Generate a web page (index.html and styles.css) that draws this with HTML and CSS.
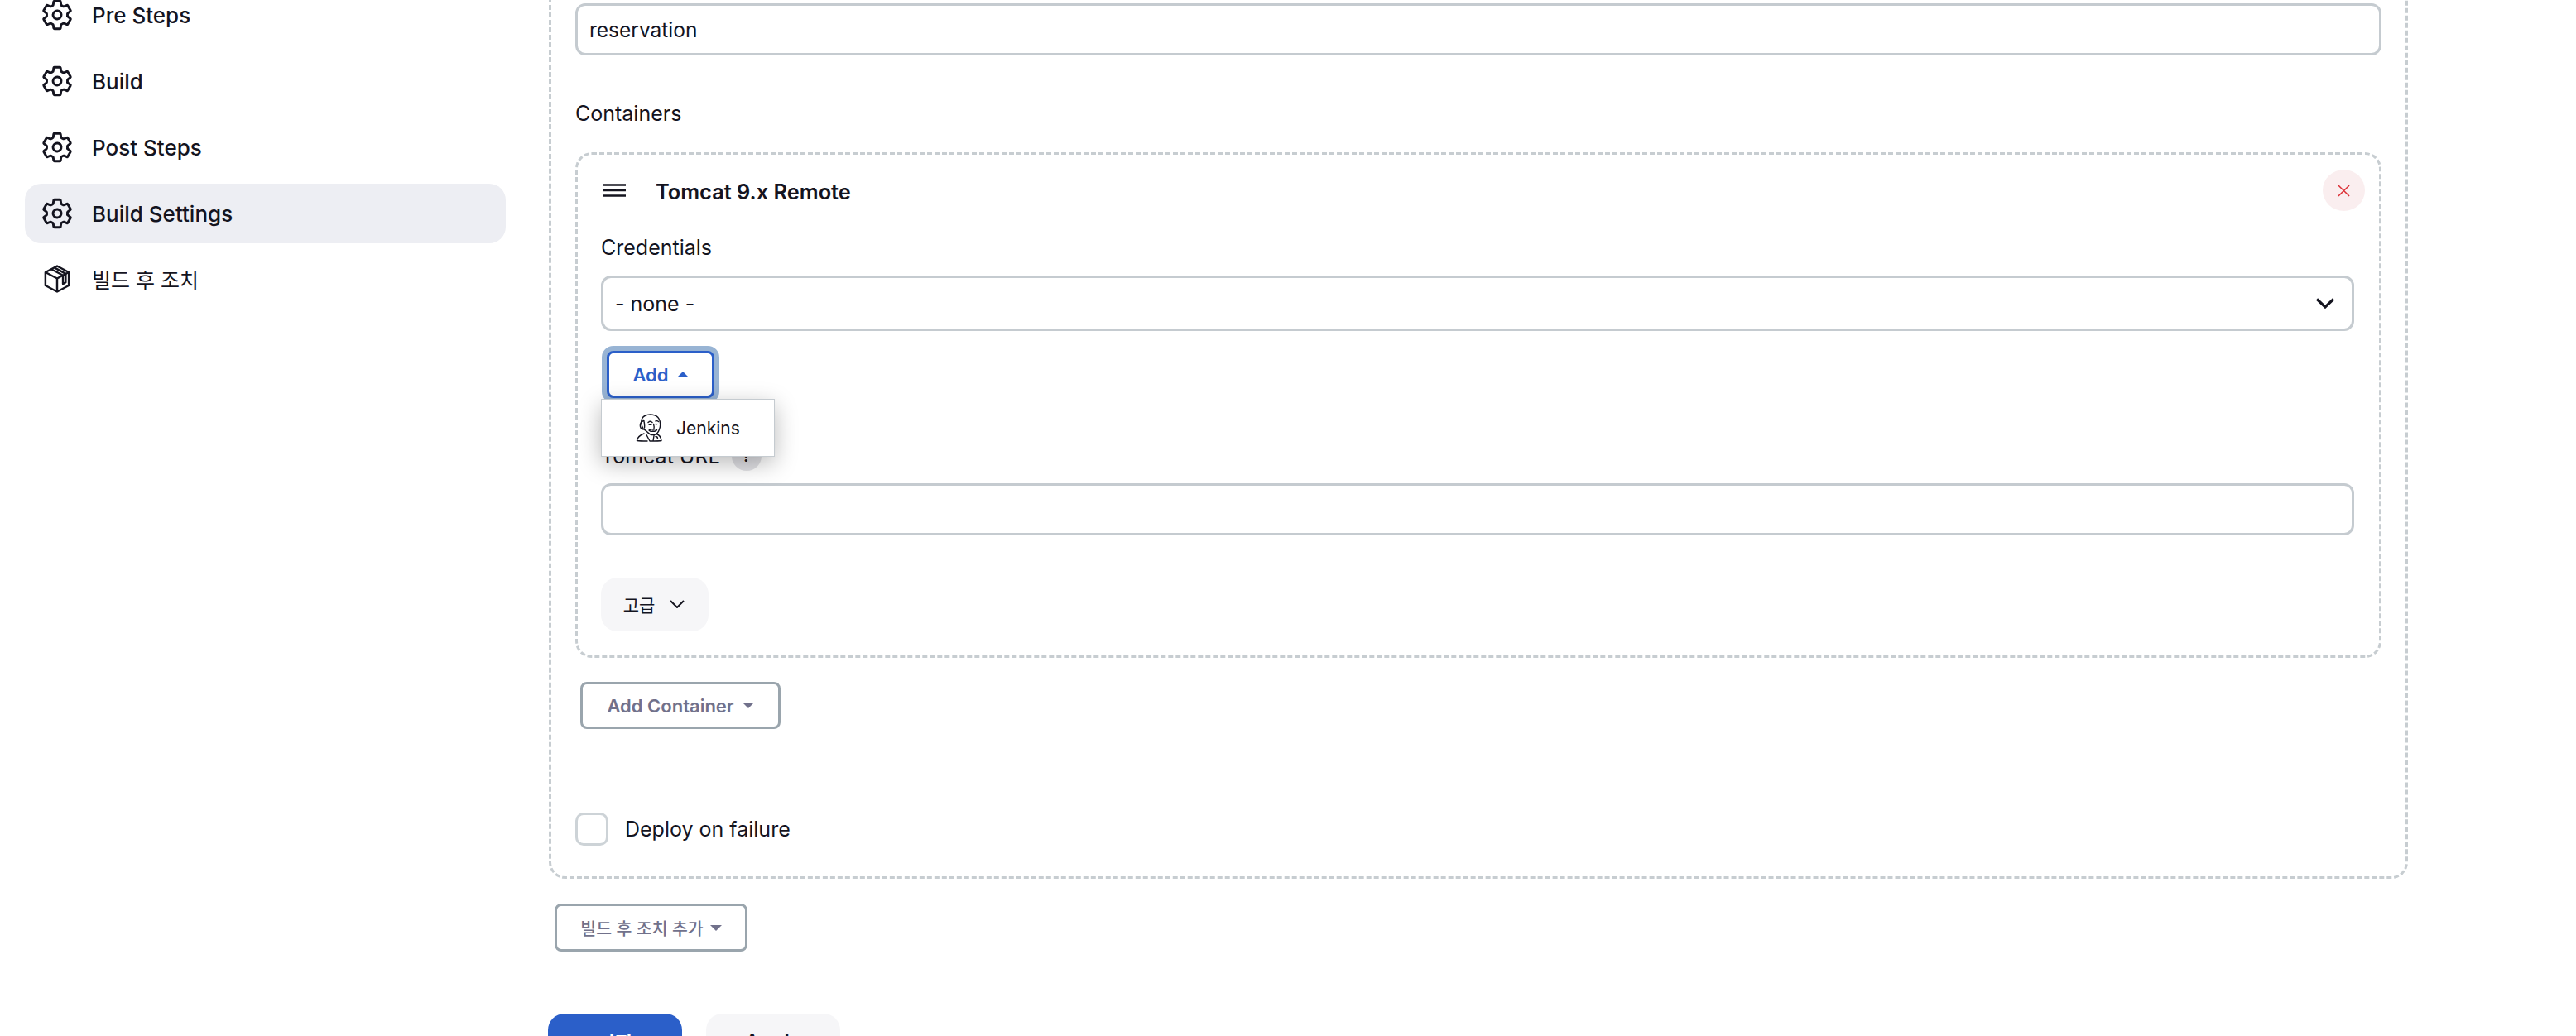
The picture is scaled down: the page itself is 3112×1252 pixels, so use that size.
FILE: index.html
```html
<!DOCTYPE html>
<html lang="en">
<head>
<meta charset="UTF-8">
<meta name="viewport" content="width=device-width, initial-scale=1.0">
<title>Build Settings</title>
<link rel="stylesheet" href="styles.css">
</head>
<body>
<svg class="sprites" width="0" height="0">
    <symbol id="gear" viewBox="0 0 512 512">
        <path d="M262.29 192.31a64 64 0 1057.4 57.4 64.13 64.13 0 00-57.4-57.4zM416.39 256a154.34 154.34 0 01-1.53 20.79l45.21 35.46a10.81 10.81 0 012.45 13.75l-42.77 74a10.81 10.81 0 01-13.14 4.59l-44.9-18.08a16.11 16.11 0 00-15.17 1.75A164.48 164.48 0 01325 400.8a15.94 15.94 0 00-8.82 12.14l-6.73 47.89a11.08 11.08 0 01-10.68 9.17h-85.54a11.11 11.11 0 01-10.69-8.87l-6.72-47.82a16.07 16.07 0 00-9-12.22 155.3 155.3 0 01-21.46-12.57 16 16 0 00-15.11-1.71l-44.89 18.07a10.81 10.81 0 01-13.14-4.58l-42.77-74a10.8 10.8 0 012.45-13.75l38.21-30a16.05 16.05 0 006.07-14.08c-.36-4.17-.58-8.33-.58-12.5s.21-8.27.58-12.35a16 16 0 00-6.07-13.94l-38.19-30A10.81 10.81 0 0149.48 186l42.77-74a10.81 10.81 0 0113.14-4.59l44.9 18.08a16.11 16.11 0 0015.17-1.75A164.48 164.48 0 01187 111.2a15.94 15.94 0 008.82-12.14l6.73-47.89A11.08 11.08 0 01213.23 42h85.54a11.11 11.11 0 0110.69 8.87l6.72 47.82a16.07 16.07 0 009 12.22 155.3 155.3 0 0121.46 12.57 16 16 0 0015.11 1.71l44.89-18.07a10.81 10.81 0 0113.14 4.58l42.77 74a10.8 10.8 0 01-2.45 13.75l-38.21 30a16.05 16.05 0 00-6.07 14.08c.33 4.14.55 8.3.55 12.47z" fill="none" stroke="currentColor" stroke-width="37" stroke-linecap="round" stroke-linejoin="round"/>
    </symbol>
</svg>

<div class="page">
    <nav class="sidebar">
        <a class="task"><svg class="task-icon"><use href="#gear"/></svg>Pre Steps</a>
        <a class="task"><svg class="task-icon"><use href="#gear"/></svg>Build</a>
        <a class="task"><svg class="task-icon"><use href="#gear"/></svg>Post Steps</a>
        <a class="task active"><svg class="task-icon"><use href="#gear"/></svg>Build Settings</a>
        <a class="task task-ko">
            <svg class="task-icon box-icon" viewBox="0 0 34 36" fill="none" stroke="currentColor" stroke-width="2.600" stroke-linejoin="round">
                <path d="M17 1.500 32 9.500V26.500L17 34.500 2 26.500V9.500Z"/>
                <path d="M2 9.500 17 17.500 32 9.500M17 17.500V34.500"/>
                <path d="M9.500 5.500 24.500 13.500V24.500L28 22.500V11.500L13.500 3.500"/>
            </svg>빌드 후 조치
        </a>
    </nav>

    <main class="main">
        <section class="step">
            <input class="field" type="text" value="reservation">
            <div class="label containers-label">Containers</div>

            <div class="container-card">
                <div class="card-head">
                    <svg class="handle" viewBox="0 0 28 16" fill="none" stroke="currentColor" stroke-width="2.400">
                        <path d="M0 1.500H28M0 8H28M0 14.500H28"/>
                    </svg>
                    <span class="card-title">Tomcat 9.x Remote</span>
                    <button class="delete">
                        <svg viewBox="0 0 16 16" fill="none" stroke="currentColor" stroke-width="1.600">
                            <path d="M1 1 15 15M15 1 1 15"/>
                        </svg>
                    </button>
                </div>

                <div class="label cred-label">Credentials</div>
                <div class="select">
                    <span>- none -</span>
                    <svg class="select-arrow" viewBox="0 0 22 13" fill="none" stroke="currentColor" stroke-width="3.200">
                        <path d="M1 1.500 11 11 21 1.500"/>
                    </svg>
                </div>

                <div class="add-wrap">
                    <button class="btn-outline btn-focus">Add <i class="caret caret-up"></i></button>
                    <div class="menu">
                        <svg class="jenkins" viewBox="0 0 34 34" fill="none" stroke="#14141f" stroke-width="1.400" stroke-linecap="round" stroke-linejoin="round">
                            <path d="M9 18C5.500 12 6 5 11 2.500 16 0 25 .5 28 6c2 4 2 9 .5 13-1 3-3 5.500-6 6.500-3 .5-6-.5-8-3-2-2-4-3-5.500-4.500"/>
                            <path d="M9.500 8.500C6.500 9.500 5 12.500 5.500 15.500 6 18 8.500 19.500 10.500 18.500"/>
                            <path d="M9.500 7.500c1 3 1.500 6 1 9.500M15 10.500c1.500-1.500 3.500-1.500 5 0M24 9c1-.5 2.500-.5 3.500 .5"/>
                            <path d="M16 13c1 .5 2 .5 3 0M24 12.500c.8 .3 1.500 .3 2 0M21.500 12.500c.5 2 1 3.500 .5 5"/>
                            <path d="M16 20c2-1.500 4-1.500 5.500-1 1.500-.5 3-.5 4 .5-1 1.500-3 2-4.500 1.500-1.500.5-3.500 .5-5-1Z"/>
                            <path d="M10 24C6 25.500 2 28 1.500 32.500 5 33 10 33 14 33M13 25.500 17 33M25 24.500c3 1 5.500 3 6 8-2 .5-9 .5-14 .5M22 26.500l-1 6.500M24 27.500c1.500 0 2.500 1 2.500 2.500"/>
                        </svg>
                        <span>Jenkins</span>
                    </div>
                </div>

                <div class="label url-label">Tomcat URL <span class="help">?</span></div>
                <input class="field url-field" type="text">

                <button class="btn-soft advanced">
                    고급
                    <svg class="adv-arrow" viewBox="0 0 18 10" fill="none" stroke="currentColor" stroke-width="2">
                        <path d="M1 1 9 9 17 1"/>
                    </svg>
                </button>
            </div>

            <button class="btn-outline add-container">Add Container <i class="caret"></i></button>

            <label class="check-row">
                <span class="check-box"></span>
                Deploy on failure
            </label>
        </section>

        <button class="btn-outline add-step">빌드 후 조치 추가 <i class="caret"></i></button>

        <div class="actions">
            <button class="btn-save">저장</button>
            <button class="btn-soft btn-apply">Apply</button>
        </div>
    </main>
</div>
</body>
</html>
```

FILE: styles.css
```css
html, body {
    margin: 0;
    height: 1252px;
    overflow: hidden;
    background-color: #fff;
}
body {
    font-family: Inter, "Noto Sans CJK KR", sans-serif;
    font-size: 25px;
    color: #14141f;
}
.sprites {
    display: none;
}
button {
    font-family: inherit;
    cursor: pointer;
}
.page {
    display: flex;
    margin-top: -60px;
}

/* sidebar */
.sidebar {
    width: 581px;
    margin-left: 30px;
    margin-right: 51px;
    padding-top: 42px;
    display: flex;
    flex-direction: column;
    gap: 8px;
}
.task {
    display: flex;
    align-items: center;
    height: 72px;
    padding-left: 19px;
    border-radius: 20px;
    font-size: 26px;
    font-weight: 450;
}
.task.active {
    background-color: #edeef3;
}
.task-ko {
    box-sizing: border-box;
    padding-bottom: 3px;
    font-size: 25px;
    font-weight: 400;
}
.task-icon {
    width: 40px;
    height: 40px;
    margin-right: 22px;
    flex-shrink: 0;
}
.box-icon {
    width: 32px;
    height: 34px;
    margin-left: 4px;
    margin-right: 26px;
}

/* main column */
.main {
    width: 2247px;
}
.step {
    margin-left: 1px;
    padding: 61px 29px 37px;
    border: 3px dashed #c7cdd1;
    border-radius: 20px;
}
.field {
    display: block;
    box-sizing: border-box;
    width: 100%;
    height: 63px;
    padding: 0 14px;
    border: 3px solid #c5cbd0;
    border-radius: 12px;
    font: inherit;
    font-size: 24.500px;
    color: inherit;
    background: #fff;
    outline: none;
}
.label {
    height: 36px;
    line-height: 36px;
}
.containers-label {
    margin-top: 52px;
}
.container-card {
    margin-top: 29px;
    padding: 18px 30px 29px 28px;
    border: 3px dashed #c7cdd1;
    border-radius: 20px;
}
.card-head {
    display: flex;
    align-items: center;
    height: 50px;
}
.handle {
    width: 28px;
    height: 16px;
    margin-left: 2px;
    margin-right: 36px;
}
.card-title {
    flex: 1;
    padding-top: 2px;
    font-size: 25.400px;
    font-weight: 600;
}
.delete {
    display: flex;
    align-items: center;
    justify-content: center;
    width: 51px;
    height: 50px;
    margin-right: -13px;
    padding: 0;
    border: none;
    border-radius: 50%;
    background-color: #faeeef;
    color: #dc2f35;
}
.delete svg {
    width: 15px;
    height: 15px;
}
.cred-label {
    margin-top: 26px;
}
.select {
    display: flex;
    align-items: center;
    justify-content: space-between;
    box-sizing: border-box;
    height: 67px;
    margin-top: 16px;
    padding: 0 21px 0 14px;
    border: 3px solid #c5cbd0;
    border-radius: 12px;
}
.select-arrow {
    width: 22px;
    height: 13px;
}
.add-wrap {
    position: relative;
    margin-top: 24px;
    margin-left: 7px;
}
.btn-outline {
    box-sizing: border-box;
    display: inline-flex;
    align-items: center;
    justify-content: center;
    gap: 10px;
    height: 57px;
    background: #fff;
    border: 3px solid #9aa5ad;
    border-radius: 8px;
    color: #71718b;
    font-size: 22px;
    font-weight: 600;
}
.btn-focus {
    display: flex;
    width: 130px;
    border-color: #2b5fc9;
    color: #2b5fc9;
    box-shadow: 0 0 0 6px #98b4d4;
}
.caret {
    width: 0;
    height: 0;
    border-left: 7px solid transparent;
    border-right: 7px solid transparent;
    border-top: 7px solid currentColor;
}
.caret-up {
    border-top: none;
    border-bottom: 7px solid currentColor;
}
.menu {
    position: absolute;
    left: -7px;
    top: 58px;
    display: flex;
    align-items: center;
    box-sizing: border-box;
    width: 210px;
    height: 70px;
    padding-left: 41px;
    background: #fff;
    border: 1px solid #c5cbd0;
    box-shadow: 0 8px 28px rgba(0, 0, 0, 0.28);
    font-size: 21px;
    z-index: 2;
}
.jenkins {
    width: 34px;
    height: 34px;
    margin-right: 15px;
}
.url-label {
    display: flex;
    align-items: center;
    gap: 14px;
    margin-top: 52px;
}
.help {
    display: inline-flex;
    align-items: center;
    justify-content: center;
    width: 36px;
    height: 36px;
    border-radius: 50%;
    background-color: #e2e2e6;
    font-size: 20px;
    font-weight: 600;
}
.url-field {
    margin-top: 15px;
}
.btn-soft {
    background-color: #f6f6f8;
    border: none;
    border-radius: 20px;
    color: #14141f;
    font-size: 22px;
}
.advanced {
    display: flex;
    align-items: center;
    justify-content: center;
    gap: 18px;
    width: 130px;
    height: 65px;
    margin-top: 51px;
    padding: 0 2px 2px 0;
    font-size: 21px;
}
.adv-arrow {
    width: 18px;
    height: 10px;
}
.add-container {
    display: flex;
    width: 242px;
    margin-top: 29px;
    margin-left: 6px;
}
.check-row {
    display: flex;
    align-items: center;
    gap: 20px;
    margin-top: 101px;
}
.check-box {
    box-sizing: border-box;
    width: 40px;
    height: 40px;
    border: 3px solid #cdd3d7;
    border-radius: 10px;
}
.add-step {
    display: flex;
    gap: 8px;
    width: 233px;
    height: 58px;
    margin-top: 30px;
    margin-left: 8px;
    font-size: 20.500px;
    font-weight: 500;
}
.actions {
    display: flex;
    gap: 29px;
    margin-top: 75px;
}
.btn-save, .btn-apply {
    width: 162px;
    height: 68px;
    font-size: 24px;
    font-weight: 600;
}
.btn-save {
    background-color: #2b5fc9;
    border: none;
    border-radius: 20px;
    color: #fff;
}
```
